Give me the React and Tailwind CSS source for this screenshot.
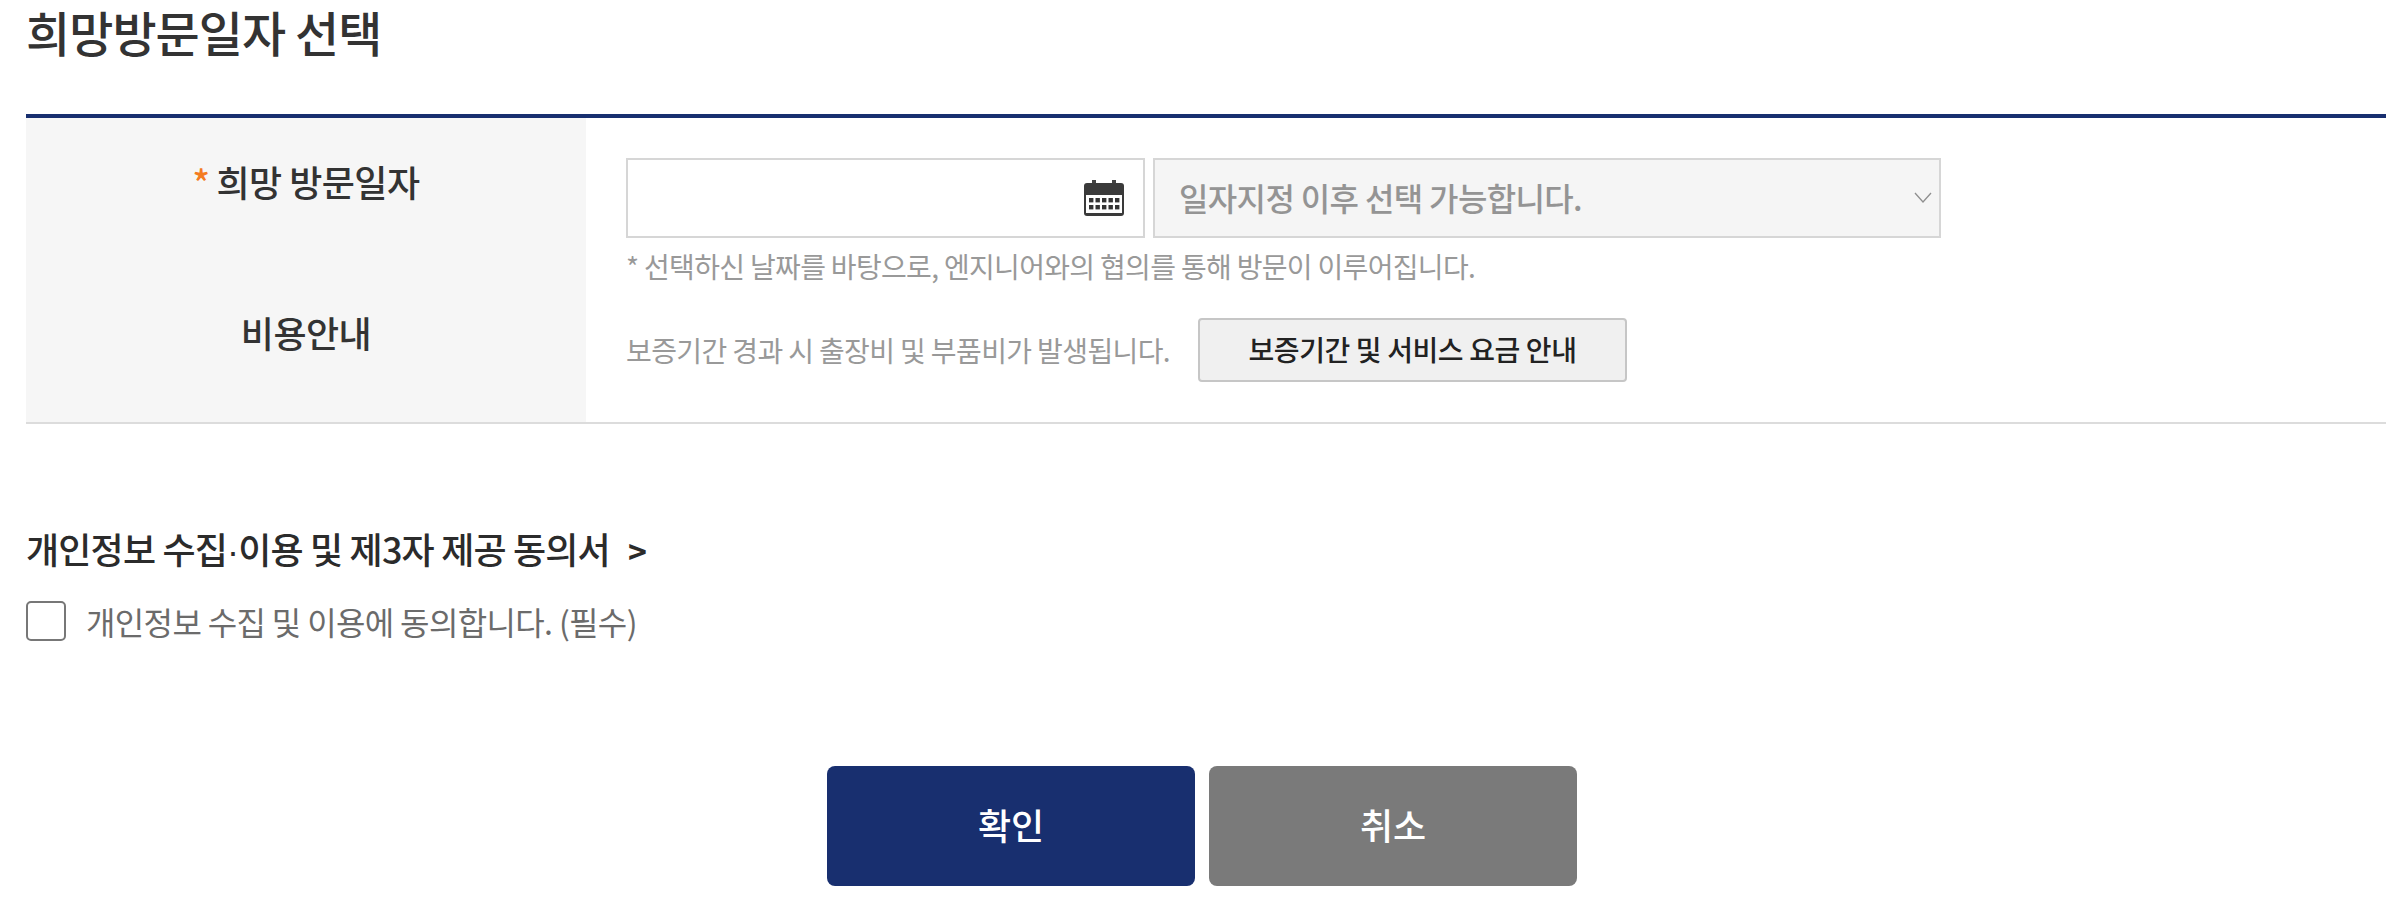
import React, { useState } from 'react';

const CalendarIcon = () => (
  <svg width="40" height="36" viewBox="0 0 40 36" className="absolute right-[19px] top-[20px]">
    <rect x="8" y="0" width="4" height="5" fill="#444" />
    <rect x="28" y="0" width="4" height="5" fill="#444" />
    <path d="M3 3h34a3 3 0 0 1 3 3v27a3 3 0 0 1-3 3H3a3 3 0 0 1-3-3V6a3 3 0 0 1 3-3z" fill="#3a3a3a" />
    <rect x="2" y="15" width="36" height="18" fill="#fff" />
    {[0, 1].map((r) =>
      [0, 1, 2, 3, 4].map((c) => (
        <rect key={`${r}-${c}`} x={5 + c * 6.5} y={18 + r * 7} width="4.4" height="4.4" fill="#333" />
      ))
    )}
  </svg>
);

const Chevron = () => (
  <svg width="18" height="11" viewBox="0 0 18 11" className="absolute right-[7px] top-[32px]">
    <path d="M1 1l8 9 8-9" fill="none" stroke="#8f8f8f" strokeWidth="1.3" />
  </svg>
);

export default function App() {
  const [agree, setAgree] = useState(false);

  return (
    <div className="bg-white w-[2406px] h-[904px] pl-[26px] pr-[20px] font-['Noto_Sans_CJK_KR','Noto_Sans',sans-serif] text-[#333]">
      <h2 className="h-[114px] pt-[3px] text-[48px] leading-[56px] font-medium tracking-[-0.02em]">희망방문일자 선택</h2>

      <div className="border-t-4 border-b-2 border-t-[#182f6f] border-b-[#dcdcdc] grid grid-cols-[560px_1fr]">
        <div className="bg-[#f6f6f6] pt-[38px] text-center text-[36px] leading-[50px] font-medium tracking-[-0.015em]">
          <span className="text-[#f47b20] mr-[7px]">*</span>희망 방문일자
        </div>
        <div className="pt-[40px] pl-[40px] pb-[32px]">
          <div className="flex gap-[8px]">
            <div className="relative w-[519px] h-[80px] border-2 border-[#d6d6d6] bg-white">
              <CalendarIcon />
            </div>
            <div className="relative w-[788px] h-[80px] border-2 border-[#d6d6d6] bg-[#f5f5f5] pl-[24px] text-[32px] leading-[74px] font-medium text-[#949494] tracking-[-0.02em]">
              일자지정 이후 선택 가능합니다.
              <Chevron />
            </div>
          </div>
          <p className="mt-[8px] text-[28px] leading-[40px] font-normal text-[#999] tracking-[-0.024em]">
            * 선택하신 날짜를 바탕으로, 엔지니어와의 협의를 통해 방문이 이루어집니다.
          </p>
        </div>

        <div className="bg-[#f6f6f6] -mt-[3px] pb-[3px] text-center text-[36px] leading-[34px] font-medium tracking-[-0.015em]">비용안내</div>
        <div className="pl-[40px] pb-[40px] flex items-center">
          <p className="text-[28px] leading-[40px] font-normal text-[#999] tracking-[-0.022em]">
            보증기간 경과 시 출장비 및 부품비가 발생됩니다.
          </p>
          <button className="ml-[28px] w-[429px] h-[64px] pb-[3px] bg-[#f0f0f0] border-2 border-[#c6c6c6] rounded-[4px] text-[28px] font-medium text-[#222] tracking-[-0.014em]">
            보증기간 및 서비스 요금 안내
          </button>
        </div>
      </div>

      <div className="mt-[104px] text-[36px] leading-[40px] font-medium tracking-[-0.023em] text-[#2b2b2b]">
        개인정보 수집<span className="font-['Liberation_Sans',sans-serif]">·</span>이용 및 제3자 제공 동의서<span className="ml-[18px] text-[32px] font-bold">&gt;</span>
      </div>

      <label className="mt-[29px] flex items-center gap-[20px]">
        <input
          type="checkbox"
          checked={agree}
          onChange={(e) => setAgree(e.target.checked)}
          className="appearance-none w-[40px] h-[40px] border-2 border-[#777] rounded-[5px] bg-white"
        />
        <span className="text-[32px] leading-[40px] font-normal text-[#6b6b6b] tracking-[-0.02em]">
          개인정보 수집 및 이용에 동의합니다. (필수)
        </span>
      </label>

      <div className="mt-[125px] pr-[8px] flex justify-center gap-[14px]">
        <button className="w-[368px] h-[120px] pb-[4px] rounded-[8px] bg-[#182f6f] text-white text-[36px] font-medium">확인</button>
        <button className="w-[368px] h-[120px] pb-[4px] rounded-[8px] bg-[#7a7a7a] text-white text-[36px] font-medium">취소</button>
      </div>
    </div>
  );
}
